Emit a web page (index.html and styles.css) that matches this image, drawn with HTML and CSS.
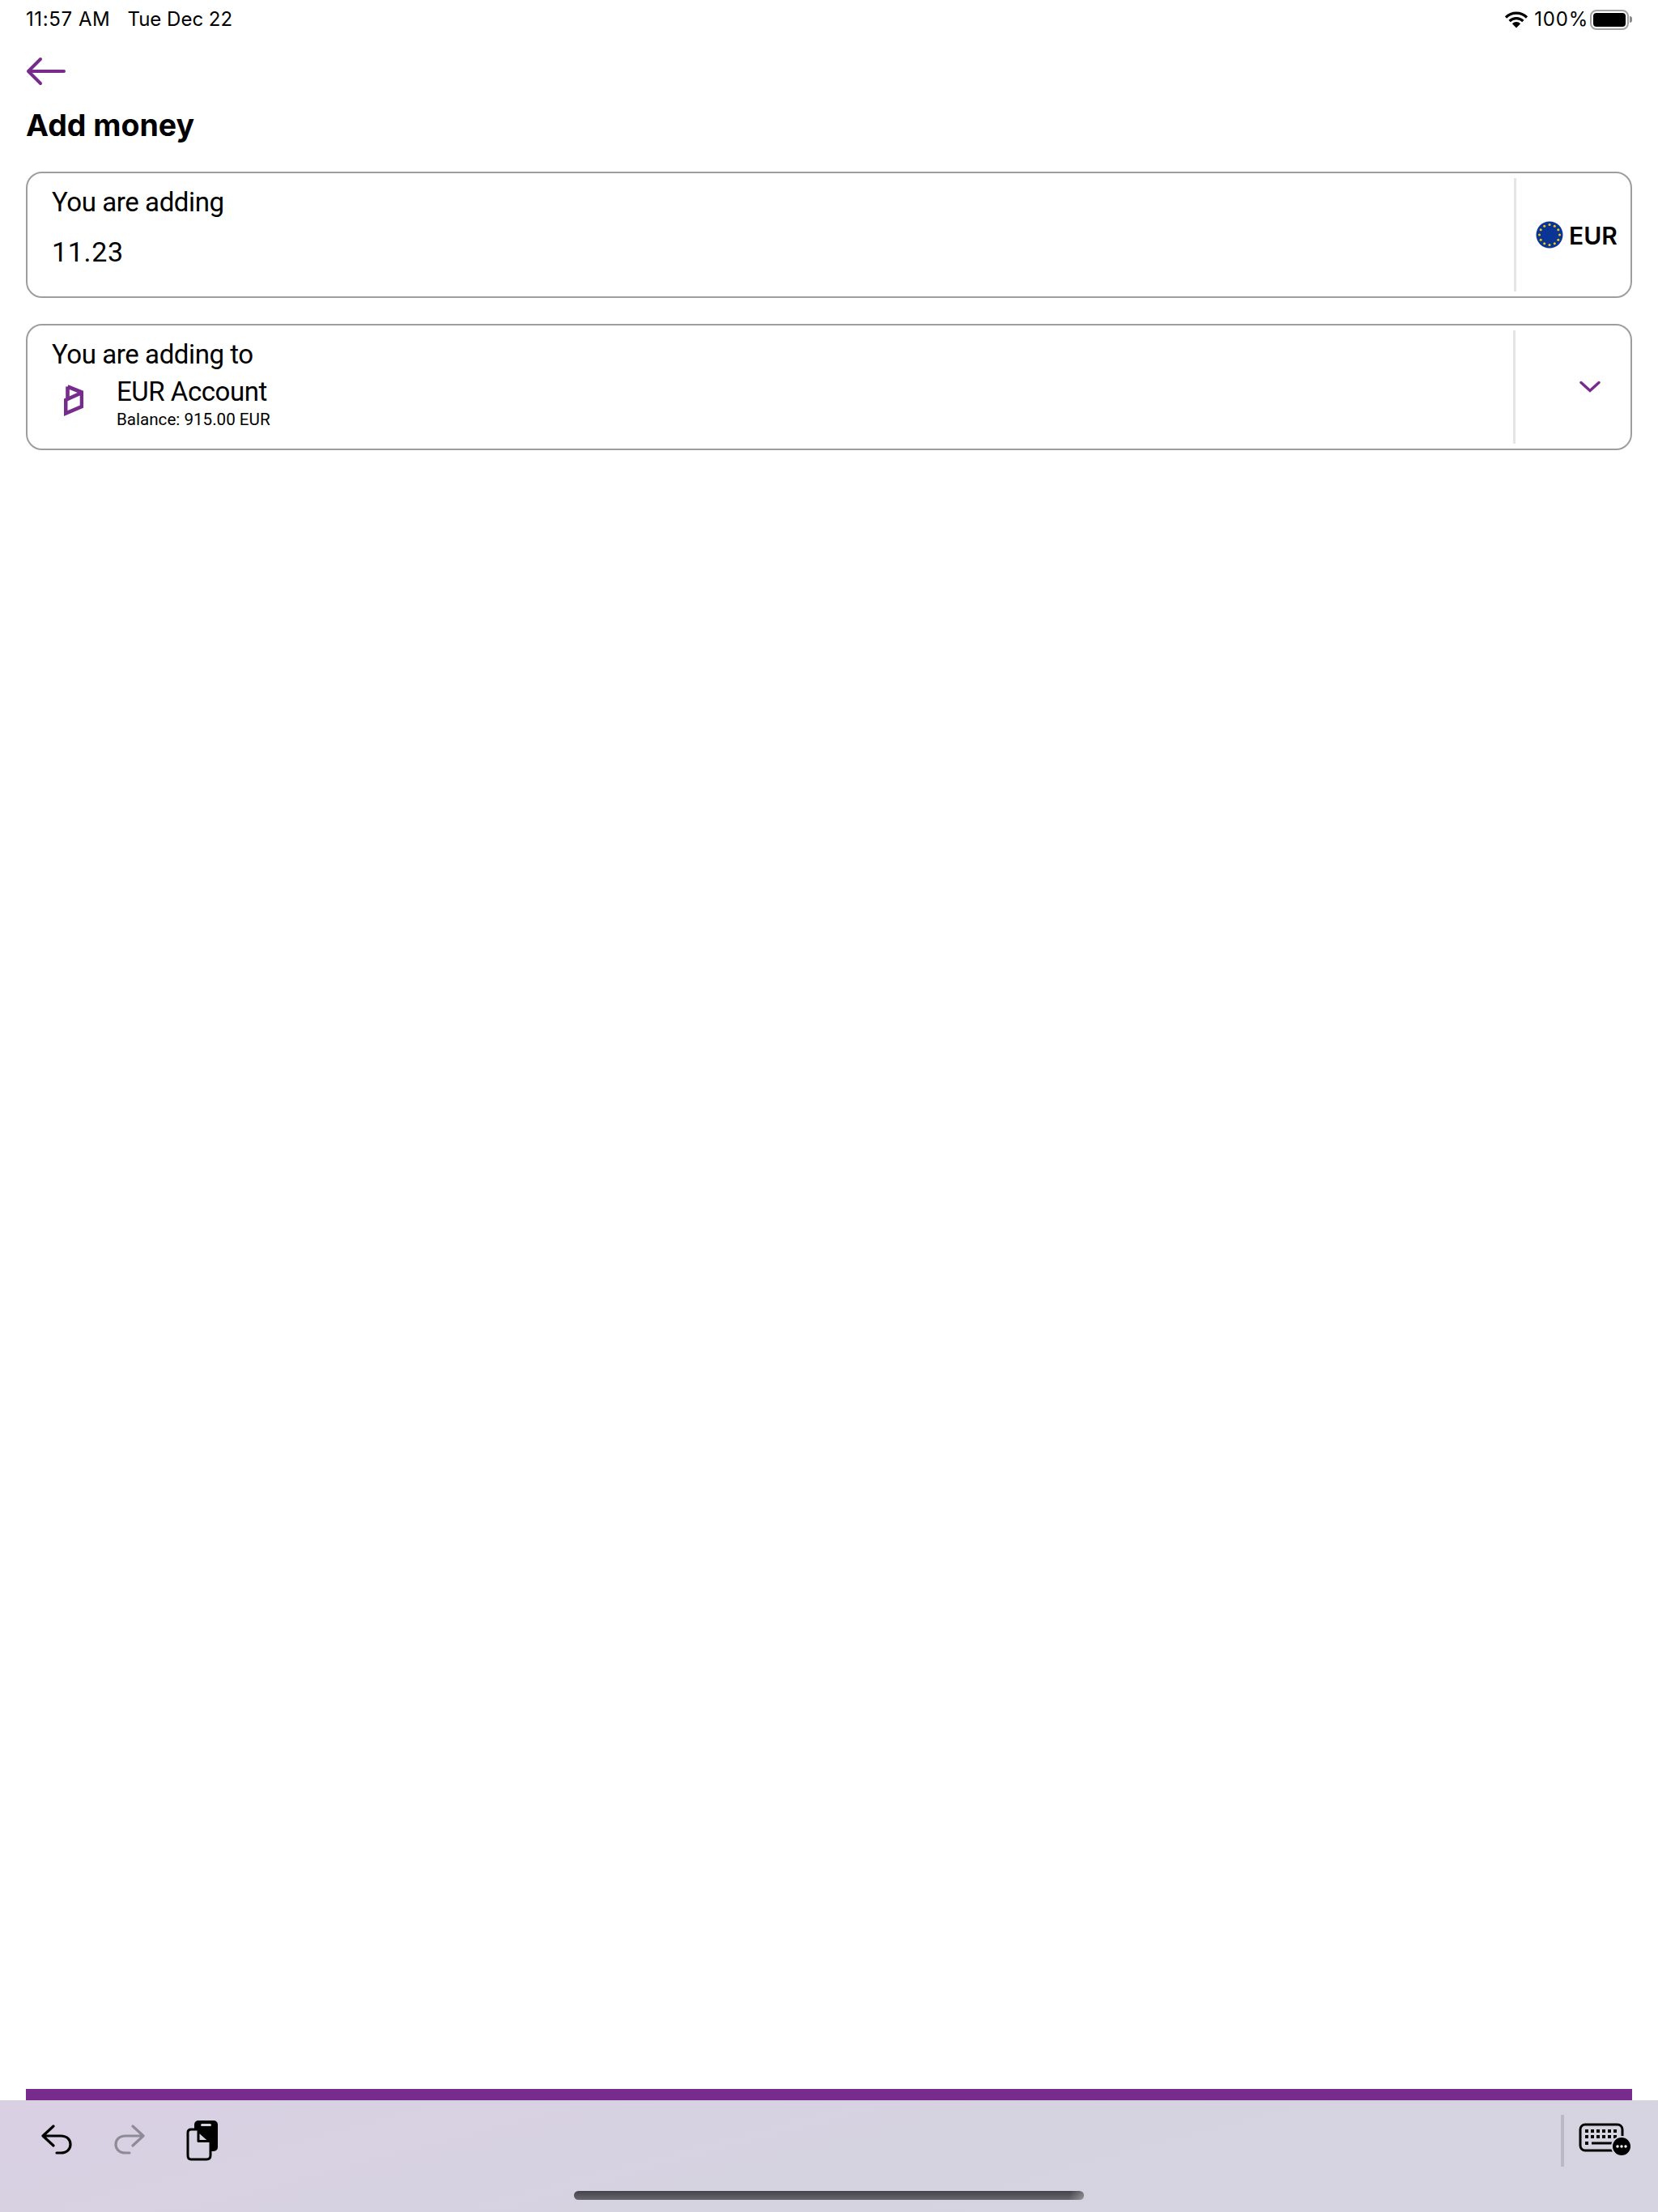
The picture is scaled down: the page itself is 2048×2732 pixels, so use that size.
FILE: index.html
```html
<!DOCTYPE html>
<html lang="en">
<head>
<meta charset="utf-8">
<title>Add money</title>
<link rel="stylesheet" href="styles.css">
</head>
<body>
<div class="page">
  <header class="status">
    <div class="status-left"><span class="time">11:57 AM</span><span>Tue Dec 22</span></div>
    <div class="status-right">
      <svg class="wifi" width="30" height="22" viewBox="0 0 30 22"><path d="M2 8.500a18.500 18.500 0 0 1 26 0M6.600 13a12 12 0 0 1 16.800 0M11 17.300a5.600 5.600 0 0 1 8 0" fill="none" stroke="#000" stroke-width="3.200"/><path d="M15 21.500l-3.400-3.400a5 5 0 0 1 6.800 0z"/></svg>
      <span class="pct">100%</span>
      <div class="battery"><div class="battery-fill"></div></div>
      <div class="battery-nub"></div>
    </div>
  </header>
  <main class="main">
    <svg class="back" width="50" height="36" viewBox="0 0 50 36"><path d="M47 18H3M18 3 3 18l15 15" fill="none" stroke="#762b8d" stroke-width="4" stroke-linecap="round" stroke-linejoin="round"/></svg>
    <h1 class="title">Add money</h1>
    <section class="card">
      <div class="card-body">
        <div class="label">You are adding</div>
        <div class="amount">11.23</div>
      </div>
      <div class="divider"></div>
      <div class="currency">
        <svg class="flag" width="34" height="34" viewBox="0 0 34 34">
          <circle cx="17" cy="17" r="16.500" fill="#0a3594"/>
          <g fill="#f2c811">
            <circle cx="17" cy="4.500" r="1.500"/><circle cx="23.300" cy="6.200" r="1.500"/><circle cx="27.800" cy="10.700" r="1.500"/><circle cx="29.500" cy="17" r="1.500"/><circle cx="27.800" cy="23.300" r="1.500"/><circle cx="23.300" cy="27.800" r="1.500"/><circle cx="17" cy="29.500" r="1.500"/><circle cx="10.700" cy="27.800" r="1.500"/><circle cx="6.200" cy="23.300" r="1.500"/><circle cx="4.500" cy="17" r="1.500"/><circle cx="6.200" cy="10.700" r="1.500"/><circle cx="10.700" cy="6.200" r="1.500"/>
          </g>
        </svg>
        <span class="code">EUR</span>
      </div>
    </section>
    <section class="card card-to">
      <div class="card-body">
        <div class="label">You are adding to</div>
        <div class="account">
          <svg class="logo" width="24" height="40" viewBox="0 0 24 40"><path d="M4.500 3.500 22 10.500V28L2.200 36.500V20L22 11M4.500 3.500V19" fill="none" stroke="#762b8d" stroke-width="4.600"/></svg>
          <div class="account-text">
            <div class="account-name">EUR Account</div>
            <div class="account-balance">Balance: 915.00 EUR</div>
          </div>
        </div>
      </div>
      <div class="divider"></div>
      <div class="select">
        <svg width="26" height="16" viewBox="0 0 26 16"><path d="M2 2.500 13 12.500 24 2.500" fill="none" stroke="#762b8d" stroke-width="3.400" stroke-linecap="round"/></svg>
      </div>
    </section>
  </main>
  <div class="accent"></div>
  <footer class="toolbar">
    <div class="tools">
      <svg class="tool" width="40" height="38" viewBox="0 0 40 38"><path d="M16 2 3 14 16 26M3 14H25C33 14 37 19 37 24.500S33 35 25 35H20" fill="none" stroke="#000" stroke-width="3.200" stroke-linecap="round" stroke-linejoin="round"/></svg>
      <svg class="tool" width="40" height="38" viewBox="0 0 40 38"><path d="M24 2 37 14 24 26M37 14H15C7 14 3 19 3 24.500S7 35 15 35H20" fill="none" stroke="#8e8b97" stroke-width="3.200" stroke-linecap="round" stroke-linejoin="round"/></svg>
      <svg class="tool" width="40" height="50" viewBox="0 0 40 50">
        <rect x="10" y="0" width="29" height="38" rx="5"/>
        <rect x="18" y="4" width="13" height="3" rx="1.500" fill="#d8d3e2"/>
        <path d="M6 11H16L30 26V43Q30 48 25 48H6Q2 48 2 43V15Q2 11 6 11Z" fill="#d8d3e2" stroke="#000" stroke-width="3"/>
        <path d="M15 13V25.500H29Z" fill="#d8d3e2" stroke="#000" stroke-width="3" stroke-linejoin="round"/>
      </svg>
    </div>
    <div class="tools-right">
      <div class="tool-sep"></div>
      <svg class="keyboard" width="66" height="50" viewBox="0 0 66 50">
        <rect x="2" y="2" width="52" height="32" rx="6" fill="none" stroke="#000" stroke-width="3"/>
        <g>
          <rect x="8" y="8" width="4" height="4"/><rect x="15" y="8" width="4" height="4"/><rect x="22" y="8" width="4" height="4"/><rect x="29" y="8" width="4" height="4"/><rect x="36" y="8" width="4" height="4"/><rect x="43" y="8" width="4" height="4"/>
          <rect x="8" y="15" width="4" height="4"/><rect x="15" y="15" width="4" height="4"/><rect x="22" y="15" width="4" height="4"/><rect x="29" y="15" width="4" height="4"/><rect x="36" y="15" width="4" height="4"/><rect x="43" y="15" width="4" height="4"/>
          <rect x="8" y="23" width="4" height="4"/><rect x="16" y="23.500" width="26" height="3"/>
        </g>
        <circle cx="53" cy="29" r="13" fill="#d6d3e1"/>
        <circle cx="53" cy="29" r="11" fill="#000"/>
        <circle cx="48" cy="29" r="1.700" fill="#fff"/><circle cx="53" cy="29" r="1.700" fill="#fff"/><circle cx="58" cy="29" r="1.700" fill="#fff"/>
      </svg>
    </div>
    <div class="home"></div>
  </footer>
</div>
</body>
</html>
```

FILE: styles.css
```css
* { box-sizing: border-box; }
html, body { margin: 0; padding: 0; background: #fff; }
body { font-family: Roboto, "Noto Sans", sans-serif; color: #000; }
.page { width: 2048px; height: 2732px; display: flex; flex-direction: column; overflow: hidden; }

.status { height: 48px; flex: none; display: flex; justify-content: space-between; align-items: flex-start; padding: 9px 32px 0; font-family: Inter, sans-serif; font-size: 24px; line-height: 30px; }
.status-left { display: flex; gap: 21px; }
.time { letter-spacing: 0.6px; }
.status-right { display: flex; align-items: center; height: 30px; }
.wifi { margin-right: 7px; }
.pct { margin-right: 2px; letter-spacing: 0.8px; }
.battery { width: 48px; height: 25px; border: 2px solid #a3a3a3; border-radius: 8px; padding: 2px; }
.battery-fill { width: 100%; height: 100%; background: #000; border-radius: 4px; }
.battery-nub { width: 3px; height: 8px; margin-left: 1px; background: #8a8a8a; border-radius: 0 3px 3px 0; }

.main { flex: 1; padding: 22px 32px 0; }
.back { display: block; }
.title { margin: 24px 0 32px; font-family: Inter, sans-serif; font-size: 37.5px; line-height: 50px; font-weight: 700; }

.card { height: 156px; border: 2px solid #9e9e9e; border-radius: 20px; display: flex; align-items: stretch; }
.card-to { margin-top: 32px; }
.card-body { flex: 1; padding: 14px 0 0 30px; min-width: 0; }
.label { font-size: 33px; line-height: 44px; letter-spacing: -0.42px; }
.amount { margin-top: 17px; font-size: 34px; line-height: 44px; letter-spacing: 0.7px; }
.divider { flex: none; width: 3px; margin: 6px 0; background: #e5e5e5; }
.currency { flex: none; width: 141px; display: flex; align-items: center; gap: 7px; padding: 2px 0 0 24px; }
.flag { flex: none; margin-top: -2px; }
.code { font-family: Inter, sans-serif; font-size: 30px; font-weight: 600; line-height: 36px; }
.card-to .card-body { padding-top: 14px; }
.account { display: flex; align-items: center; margin-top: 4px; }
.logo { flex: none; margin: 0 0 9px 15px; }
.account-text { margin-left: 41px; }
.account-name { font-size: 33px; line-height: 40px; letter-spacing: -0.45px; }
.account-balance { font-size: 20.6px; line-height: 28px; }
.select { flex: none; width: 142px; display: flex; align-items: center; justify-content: center; padding: 0 0 0 42px; }

.accent { flex: none; height: 14px; margin: 0 32px; background: #762b8d; }
.toolbar { flex: none; height: 138px; position: relative; display: flex; justify-content: space-between; align-items: flex-start; padding: 18px 32px 0 50px; background: linear-gradient(165deg, #d9d0e3 0%, #d5d3e0 60%, #d6d4e1 100%); }
.tools { display: flex; align-items: flex-start; gap: 50px; padding-top: 12px; }
.tools .tool:last-child { margin-top: -5px; }
.tools-right { display: flex; align-items: flex-start; gap: 18px; }
.tool-sep { width: 4px; height: 64px; background: #bcb8c6; }
.keyboard { margin-top: 10px; }
.home { position: absolute; left: 709px; top: 112px; width: 630px; height: 11px; border-radius: 6px; background: linear-gradient(100deg, rgba(255,255,255,0) 97%, rgba(255,255,255,.3) 100%), linear-gradient(180deg, #44434b, #67666d); }
```
